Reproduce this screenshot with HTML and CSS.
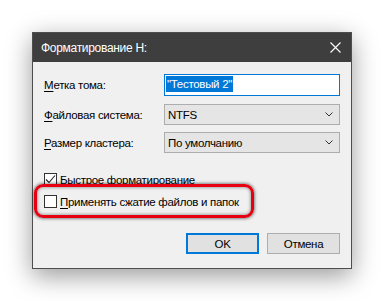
FILE: index.html
```html
<!DOCTYPE html>
<html lang="ru">
<head>
<meta charset="utf-8">
<title>Форматирование H:</title>
<link rel="stylesheet" href="styles.css">
</head>
<body>
<div class="stage">
  <div class="dialog">
    <div class="titlebar">
      <span class="title">Форматирование H:</span>
      <svg class="close" width="11" height="11" viewBox="0 0 11 11"><path d="M0.5 0.5 L10.5 10.5 M10.5 0.5 L0.5 10.5" stroke="#ffffff" stroke-width="1.1" fill="none"/></svg>
    </div>
    <div class="body">
      <div class="row row-first">
        <span class="label"><u>М</u>етка тома:</span>
        <div class="input"><span class="sel">"Тестовый 2"</span></div>
      </div>
      <div class="row row-second">
        <span class="label"><u>Ф</u>айловая система:</span>
        <div class="combo"><span>NTFS</span><svg class="chev" width="8" height="5" viewBox="0 0 8 5"><path d="M0.5 0.5 L4 4 L7.5 0.5" stroke="#333" stroke-width="1" fill="none"/></svg></div>
      </div>
      <div class="row row-third">
        <span class="label"><u>Р</u>азмер кластера:</span>
        <div class="combo"><span>По умолчанию</span><svg class="chev" width="8" height="5" viewBox="0 0 8 5"><path d="M0.5 0.5 L4 4 L7.5 0.5" stroke="#333" stroke-width="1" fill="none"/></svg></div>
      </div>
      <div class="checks">
        <div class="check">
          <span class="box"><svg width="11" height="11" viewBox="0 0 11 11"><path d="M1 5.5 L4 8.5 L10 1.5" stroke="#222" stroke-width="1.1" fill="none"/></svg></span>
          <span><u>Б</u>ыстрое форматирование</span>
        </div>
        <div class="check">
          <span class="box"></span>
          <span><u>П</u>рименять сжатие файлов и папок</span>
        </div>
        <div class="highlight"></div>
      </div>
      <div class="buttons">
        <button class="btn btn-default">OK</button>
        <button class="btn">Отмена</button>
      </div>
    </div>
  </div>
</div>
</body>
</html>
```
FILE: styles.css
```css
html, body {
  margin: 0;
  padding: 0;
  background: #ffffff;
}
body {
  font-family: "Liberation Sans", Arial, sans-serif;
  font-size: 11.5px;
  letter-spacing: -0.3px;
  color: #000;
}
.stage {
  padding: 32px;
  height: 301px;
  box-sizing: border-box;
}
.dialog {
  width: 320px;
  box-sizing: border-box;
  border: 1px solid #4d4d4d;
  background: #f0f0f0;
  box-shadow: 0 7px 24px rgba(0, 0, 0, 0.4);
}
.titlebar {
  height: 29px;
  background: #3e3e3e;
  color: #ffffff;
  display: flex;
  align-items: center;
  justify-content: space-between;
  padding: 0 10px 0 8px;
}
.title {
  font-size: 12px;
}
.close {
  display: block;
}
.body {
  padding: 12px 11px 14px 11px;
}
.row {
  display: flex;
  align-items: center;
  justify-content: space-between;
}
.row-second {
  margin-top: 8px;
}
.row-third {
  margin-top: 7px;
}
.label u, .check u {
  text-decoration: underline;
  text-underline-offset: 2px;
}
.input {
  width: 176px;
  height: 22px;
  box-sizing: border-box;
  border: 1px solid #0078d7;
  background: #ffffff;
  padding: 1px 0 0 1px;
}
.sel {
  display: inline-block;
  background: #0078d7;
  color: #ffffff;
  height: 16px;
  line-height: 16px;
  padding: 0 1px;
}
.combo {
  width: 176px;
  height: 21px;
  box-sizing: border-box;
  border: 1px solid #adadad;
  background: #e5e5e5;
  display: flex;
  align-items: center;
  justify-content: space-between;
  padding: 0 6px 0 3px;
}
.chev {
  display: block;
}
.checks {
  position: relative;
  margin-top: 20px;
  display: flex;
  flex-direction: column;
  gap: 9px;
}
.check {
  display: flex;
  align-items: center;
  gap: 3px;
  height: 13px;
}
.box {
  width: 13px;
  height: 13px;
  box-sizing: border-box;
  border: 1px solid #333;
  background: #ffffff;
  display: flex;
  align-items: center;
  justify-content: center;
}
.box svg {
  display: block;
}
.highlight {
  position: absolute;
  left: -10px;
  top: 11px;
  width: 220px;
  height: 34px;
  box-sizing: border-box;
  border: 3px solid #e60012;
  border-radius: 9px;
  box-shadow: 0 0 3px 1px rgba(0, 0, 0, 0.45), inset 0 0 3px 1px rgba(0, 0, 0, 0.3);
}
.buttons {
  display: flex;
  justify-content: flex-end;
  gap: 8px;
  margin-top: 25px;
}
.btn {
  width: 73px;
  height: 21px;
  box-sizing: border-box;
  border: 1px solid #adadad;
  background: #e1e1e1;
  font-family: "Liberation Sans", Arial, sans-serif;
  font-size: 11.5px;
  letter-spacing: -0.3px;
  color: #000;
  padding: 0;
  margin: 0;
}
.btn-default {
  border: 2px solid #0078d7;
}
```
